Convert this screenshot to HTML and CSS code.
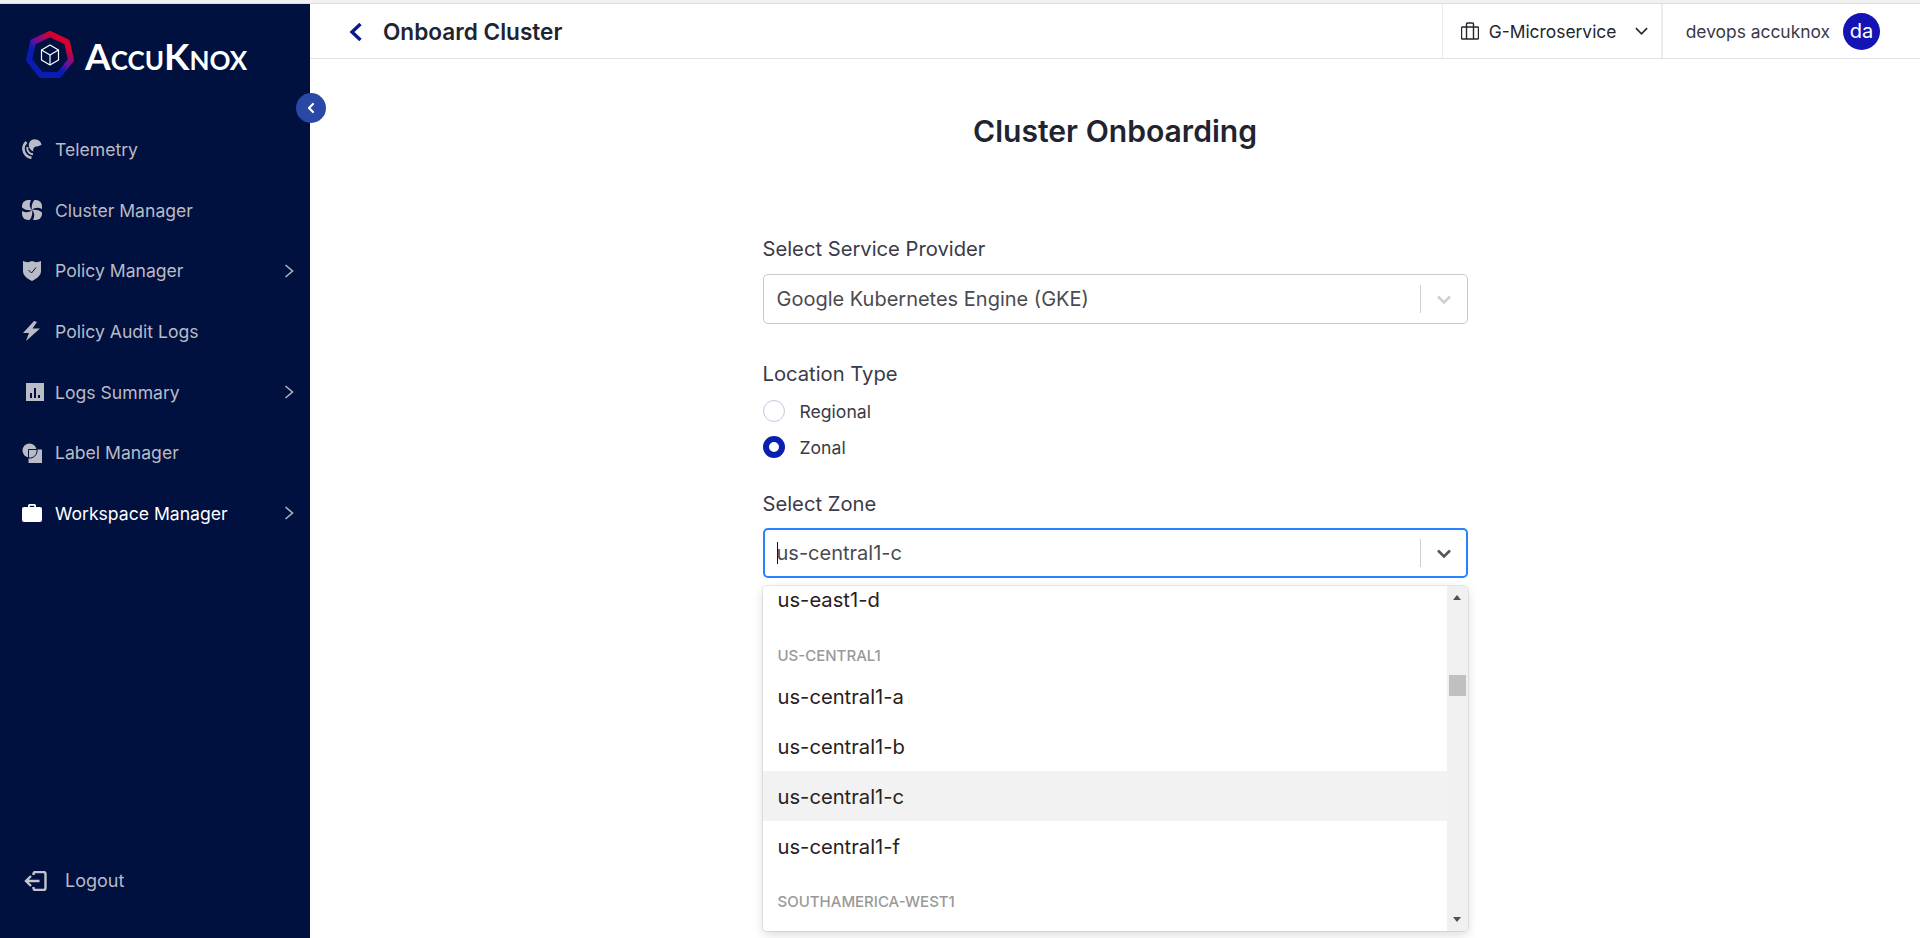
FILE: index.html
```html
<!DOCTYPE html>
<html lang="en">
<head>
    <meta charset="UTF-8">
    <meta name="viewport" content="width=device-width, initial-scale=1.0">
    <title>Onboard Cluster</title>
    <link rel="stylesheet" href="styles.css">
</head>
<body>
    <div class="top-strip"></div>
    <div class="app">
        <aside class="sidebar">
            <div class="logo">
                <svg class="logo-mark" viewBox="0 0 48 48">
                    <defs>
                        <linearGradient id="ring" x1="0.75" y1="0.1" x2="0.25" y2="0.75">
                            <stop offset="0.1" stop-color="#d4002f"/>
                            <stop offset="0.5" stop-color="#6a109c"/>
                            <stop offset="0.75" stop-color="#0a1cb4"/>
                        </linearGradient>
                    </defs>
                    <polygon points="24,3 41,11 45,29 33,44 15,44 3,29 7,11" fill="none" stroke="url(#ring)" stroke-width="6" stroke-linejoin="round"/>
                    <g fill="none" stroke="#fff" stroke-width="1.2" stroke-linejoin="round">
                        <polygon points="24,14 32.500,19 32.500,29 24,34 15.500,29 15.500,19"/>
                        <polyline points="15.500,19 24,24 32.500,19"/>
                        <line x1="24" y1="24" x2="24" y2="34"/>
                    </g>
                </svg>
                <span class="logo-text">A<small>CCU</small>K<small>NOX</small></span>
            </div>
            <button class="collapse-btn">
                <svg viewBox="0 0 12 12" width="12" height="12"><polyline points="8,2 4,6 8,10" fill="none" stroke="#fff" stroke-width="2.2" stroke-linecap="round" stroke-linejoin="round"/></svg>
            </button>
            <nav class="nav">
                <a class="nav-item">
                    <svg class="nav-icon" viewBox="0 0 20 20">
                        <path d="M7 4.500A6.500 6.500 0 0 1 19.500 6L15 7.500A3.500 3.500 0 0 0 11.500 12.500C8 11.500 6 8 7 4.500z"/>
                        <g fill="none" stroke="#b9bbc6">
                            <path d="M4.500 3A9 9 0 0 0 1.500 10.500 9 9 0 0 0 9.500 18.800" stroke-width="2.600"/>
                            <path d="M5.500 8A6 6 0 0 0 5.500 11 6.500 6.500 0 0 0 11 15.300" stroke-width="2"/>
                        </g>
                    </svg>
                    <span>Telemetry</span>
                </a>
                <a class="nav-item">
                    <svg class="nav-icon" viewBox="0 0 20 20">
                        <rect width="20" height="20" rx="6"/>
                        <g fill="#00103f">
                            <path id="arm" d="M10 10C7.500 7.500 7 4 9 0h3.500C9.500 3.500 9.500 7 10 10z"/>
                            <use href="#arm" transform="rotate(90 10 10)"/>
                            <use href="#arm" transform="rotate(180 10 10)"/>
                            <use href="#arm" transform="rotate(270 10 10)"/>
                        </g>
                    </svg>
                    <span>Cluster Manager</span>
                </a>
                <a class="nav-item">
                    <svg class="nav-icon" viewBox="0 0 20 20"><path d="M1 0c3 1.500 6 1.500 9 0 3 1.500 6 1.500 9 0v10c0 5-5 8-9 10-4-2-9-5-9-10z"/><polyline points="6.500,9 9.500,12 14,6.500" fill="none" stroke="#00103f" stroke-width="1"/></svg>
                    <span>Policy Manager</span>
                    <svg class="nav-arrow" viewBox="0 0 10 16"><polyline points="1.500,2 8.500,8 1.500,14"/></svg>
                </a>
                <a class="nav-item">
                    <svg class="nav-icon" viewBox="0 0 20 20"><path d="M12 0 1 12h6l-3 8 14-12.500h-7.500L15 1z"/></svg>
                    <span>Policy Audit Logs</span>
                </a>
                <a class="nav-item">
                    <svg class="nav-icon logs-icon" viewBox="0 0 20 20"><path d="M1 1h18v18H1z"/><path d="M5 11h2v5H5zM9 6h2v10H9zM13 13h2v3h-2z" fill="#00103f"/></svg>
                    <span>Logs Summary</span>
                    <svg class="nav-arrow" viewBox="0 0 10 16"><polyline points="1.500,2 8.500,8 1.500,14"/></svg>
                </a>
                <a class="nav-item">
                    <svg class="nav-icon" viewBox="0 0 20 20"><circle cx="7.500" cy="7.500" r="7"/><path d="M6.500 6.500H21V21H6.500z"/><path d="M6.500 6.500h8.500a7.500 7.500 0 0 1-8.500 8.500z" fill="none" stroke="#00103f" stroke-width="1"/></svg>
                    <span>Label Manager</span>
                </a>
                <a class="nav-item active">
                    <svg class="nav-icon" viewBox="0 0 20 20"><path d="M6 4V2.500A1.500 1.500 0 0 1 7.500 1h5A1.500 1.500 0 0 1 14 2.500V4h4a2 2 0 0 1 2 2v11a2 2 0 0 1-2 2H2a2 2 0 0 1-2-2V6a2 2 0 0 1 2-2zm1.800 0h4.400V2.800H7.800z" fill-rule="evenodd"/></svg>
                    <span>Workspace Manager</span>
                    <svg class="nav-arrow" viewBox="0 0 10 16"><polyline points="1.500,2 8.500,8 1.500,14"/></svg>
                </a>
            </nav>
            <a class="logout">
                <svg class="logout-icon" viewBox="0 0 24 20"><path d="M10 4V3a2 2 0 0 1 2-2h8a2 2 0 0 1 2 2v14a2 2 0 0 1-2 2h-8a2 2 0 0 1-2-2v-1M16 10H3M7.500 5 2.500 10l5 5" fill="none" stroke="#c3c5cf" stroke-width="2.400"/></svg>
                <span>Logout</span>
            </a>
        </aside>

        <div class="main">
            <header class="header">
                <svg class="back" viewBox="0 0 14 20"><polyline points="11.500,2 3,10 11.500,18"/></svg>
                <h1 class="page-title">Onboard Cluster</h1>
                <div class="workspace">
                    <svg class="bag" viewBox="0 0 18 18"><path d="M1.500 5h15a1 1 0 0 1 1 1v10a1 1 0 0 1-1 1h-15a1 1 0 0 1-1-1V6a1 1 0 0 1 1-1zM5.500 5V2a1 1 0 0 1 1-1h5a1 1 0 0 1 1 1v3M5.500 5v12M12.500 5v12"/></svg>
                    <span>G-Microservice</span>
                    <svg class="chev" viewBox="0 0 14 8"><polyline points="1,1 7,7 13,1"/></svg>
                </div>
                <div class="user">
                    <span>devops accuknox</span>
                    <span class="avatar">da</span>
                </div>
            </header>

            <main class="content">
                <h2 class="form-title">Cluster Onboarding</h2>
                <form class="form">
                    <label class="field-label">Select Service Provider</label>
                    <div class="select">
                        <span class="select-value">Google Kubernetes Engine (GKE)</span>
                        <i class="select-sep"></i>
                        <svg class="select-chev" viewBox="0 0 20 20"><polyline points="4,7.500 10,13.500 16,7.500"/></svg>
                    </div>

                    <label class="field-label location-label">Location Type</label>
                    <div class="radio-group">
                        <div class="radio-row"><i class="radio"></i><span>Regional</span></div>
                        <div class="radio-row"><i class="radio checked"></i><span>Zonal</span></div>
                    </div>

                    <label class="field-label zone-label">Select Zone</label>
                    <div class="select focused">
                        <i class="caret"></i>
                        <span class="select-value">us-central1-c</span>
                        <i class="select-sep"></i>
                        <svg class="select-chev" viewBox="0 0 20 20"><polyline points="4,7.500 10,13.500 16,7.500"/></svg>
                    </div>

                    <div class="menu">
                        <div class="menu-list">
                            <div class="option first">us-east1-d</div>
                            <div class="group">US-CENTRAL1</div>
                            <div class="option">us-central1-a</div>
                            <div class="option">us-central1-b</div>
                            <div class="option selected">us-central1-c</div>
                            <div class="option">us-central1-f</div>
                            <div class="group">SOUTHAMERICA-WEST1</div>
                        </div>
                        <div class="scrollbar">
                            <i class="arrow-up"></i>
                            <i class="thumb"></i>
                            <i class="arrow-down"></i>
                        </div>
                    </div>
                </form>
            </main>
        </div>
    </div>
</body>
</html>
```

FILE: styles.css
```css
* { box-sizing: border-box; }
html, body { height: 100%; }
body { margin: 0; overflow: hidden; background: #fff; font-family: Inter, "Noto Sans", sans-serif; color: #3a3a48; display: flex; flex-direction: column; }

.top-strip { height: 4px; background: #f1f1f1; border-bottom: 1px solid #dedede; flex: none; }
.app { flex: 1; display: flex; min-height: 0; }

/* sidebar */
.sidebar { width: 310px; flex: none; background: #00103f; color: #b9bbc6; display: flex; flex-direction: column; position: relative; }
.logo { height: 84px; padding: 27px 0 0 26px; display: flex; align-items: flex-start; gap: 11px; }
.logo-mark { width: 48px; height: 48px; flex: none; }
.logo-text { font-family: Lato, sans-serif; font-weight: 700; font-size: 37px; line-height: 49px; color: #fff; }
.logo-text small { font-size: 26px; }
.collapse-btn { position: absolute; top: 89px; left: 296px; width: 30px; height: 30px; border: 0; padding: 0; border-radius: 50%; background: #2a48a6; display: flex; align-items: center; justify-content: center; }

.nav { padding-top: 31px; }
.nav-item { height: 60.700px; padding: 0 16px 0 22px; display: flex; align-items: center; font-size: 17.600px; }
.nav-item span { flex: 1; margin-left: 13px; }
.nav-icon { width: 20px; height: 20px; fill: #b9bbc6; flex: none; }
.logs-icon { margin-left: 3px; margin-right: -3px; }
.nav-arrow { width: 10px; height: 16px; fill: none; stroke: #b0b2be; stroke-width: 1.600; flex: none; }
.nav-item.active { color: #fff; }
.nav-item.active .nav-icon { fill: #fff; }

.logout { margin-top: auto; margin-bottom: 47px; padding-left: 23px; display: flex; align-items: center; font-size: 18px; }
.logout-icon { width: 25px; height: 20px; flex: none; }
.logout span { margin-left: 17px; }

/* header */
.main { flex: 1; min-width: 0; display: flex; flex-direction: column; }
.header { height: 55px; flex: none; border-bottom: 1px solid #e3e3e6; display: flex; align-items: stretch; padding-right: 40px; }
.back { width: 14px; height: 20px; margin: 18px 0 0 39px; fill: none; stroke: #0a1a8c; stroke-width: 3.400; }
.page-title { margin: 0; flex: 1; padding-left: 20px; font-size: 22.600px; font-weight: 600; line-height: 56px; color: #1f2430; }
.workspace { width: 219px; padding-left: 18px; border-left: 1px solid #ececee; display: flex; align-items: center; font-size: 17.400px; color: #23262f; }
.workspace span { margin-left: 10px; }
.bag { width: 18px; height: 18px; fill: none; stroke: #23262f; stroke-width: 1.400; flex: none; }
.chev { width: 13px; height: 8px; margin-left: 19px; fill: none; stroke: #23262f; stroke-width: 1.800; }
.user { border-left: 2px solid #ececee; padding-left: 23px; display: flex; align-items: center; font-size: 17.400px; color: #3a3a48; }
.avatar { width: 37px; height: 37px; margin-left: 13px; border-radius: 50%; background: #1414b4; color: #fff; font-size: 20px; display: flex; align-items: center; justify-content: center; }

/* form */
.content { flex: 1; min-height: 0; }
.form-title { margin: 52px 0 0; text-align: center; font-size: 30.100px; font-weight: 600; line-height: 40px; color: #1f2430; }
.form { width: 705px; margin: 86px auto 0; }
.field-label { display: block; font-size: 20.200px; line-height: 24px; font-weight: 400; color: #3a3a48; }
.location-label { margin-top: 38px; }
.zone-label { margin-top: 27px; }

.select { height: 50px; margin-top: 13px; border: 1px solid #c9c9c9; border-radius: 5px; display: flex; align-items: center; padding-left: 13px; font-size: 20px; color: #4a4a50; }
.select-value { flex: 1; }
.select-sep { width: 1px; height: 28px; background: #cfcfcf; }
.select-chev { width: 20px; height: 20px; margin: 0 13px; fill: none; stroke: #cfcfcf; stroke-width: 2.600; }
.select.focused { margin-top: 12px; border: 2px solid #2684ff; padding-left: 12px; }
.select.focused .select-chev { stroke: #555; margin: 0 12px 0 13px; }
.caret { width: 1px; height: 22px; background: #111; margin-right: -1px; }

.radio-group { margin-top: 7px; }
.radio-row { height: 36px; display: flex; align-items: center; gap: 15px; font-size: 17.600px; color: #3a3a48; }
.radio { width: 22px; height: 22px; border-radius: 50%; border: 1px solid #c5c9e0; background: #fff; }
.radio.checked { border: 6px solid #0a1fb0; }

/* open dropdown */
.menu { height: 345px; margin-top: 8px; background: #fff; border-radius: 4px; box-shadow: 0 0 0 1px rgba(0,0,0,.08), 0 4px 11px rgba(0,0,0,.14); display: flex; overflow: hidden; }
.menu-list { flex: 1; min-width: 0; font-size: 20.200px; color: #2a2020; }
.option { height: 50px; padding-left: 15px; display: flex; align-items: center; }
.option.first { height: 39px; align-items: flex-start; line-height: 28px; }
.option.selected { background: #f2f2f2; }
.group { height: 46px; padding: 21px 0 0 15px; font-size: 15px; line-height: 20px; font-weight: 500; color: #999; }
.scrollbar { width: 21px; flex: none; background: #f0f0f0; position: relative; }
.thumb { position: absolute; top: 89px; left: 2px; width: 17px; height: 21px; background: #c0c0c0; }
.arrow-up, .arrow-down { position: absolute; left: 6px; width: 0; height: 0; border-left: 4.500px solid transparent; border-right: 4.500px solid transparent; }
.arrow-up { top: 9px; border-bottom: 5px solid #505050; }
.arrow-down { bottom: 9px; border-top: 5px solid #505050; }
```
